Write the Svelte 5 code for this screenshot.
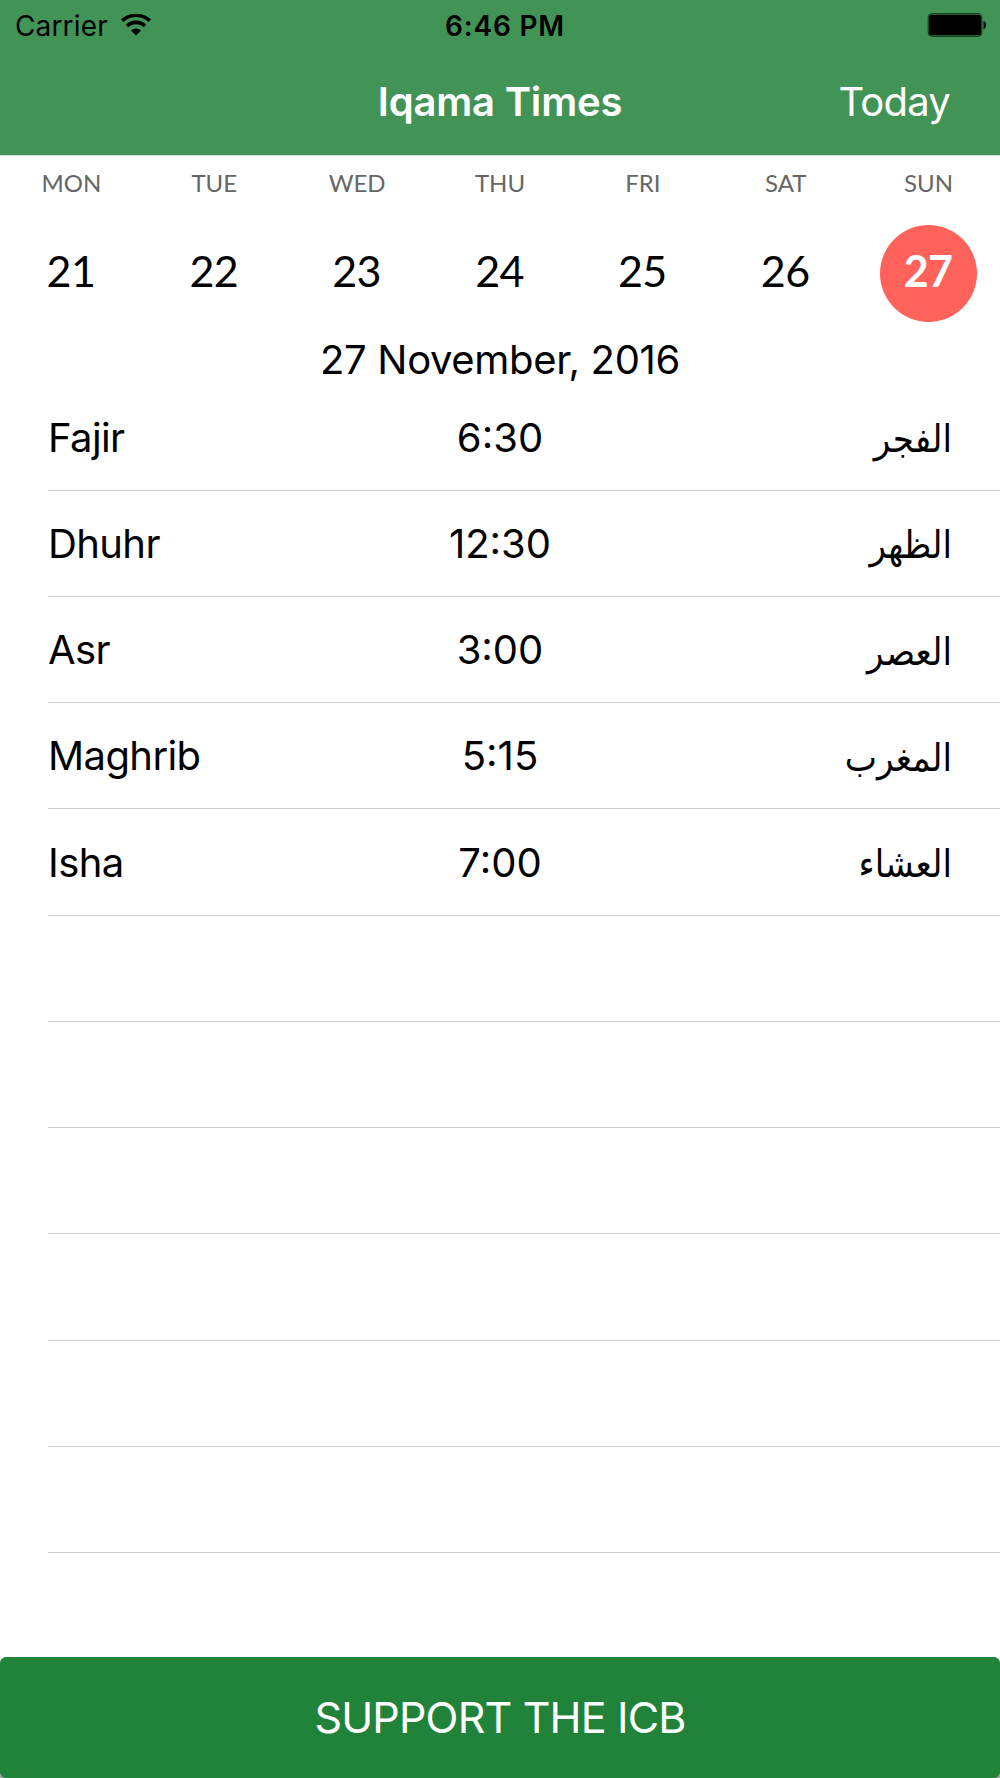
<script>
  const days = [
    { name: "MON", date: 21 },
    { name: "TUE", date: 22 },
    { name: "WED", date: 23 },
    { name: "THU", date: 24 },
    { name: "FRI", date: 25 },
    { name: "SAT", date: 26 },
    { name: "SUN", date: 27 },
  ];

  const prayers = [
    { name: "Fajir", time: "6:30", arabic: "الفجر" },
    { name: "Dhuhr", time: "12:30", arabic: "الظهر" },
    { name: "Asr", time: "3:00", arabic: "العصر" },
    { name: "Maghrib", time: "5:15", arabic: "المغرب" },
    { name: "Isha", time: "7:00", arabic: "العشاء" },
  ];

  const emptyRows = [1, 2, 3, 4, 5, 6];

  let selected = 27;
</script>

<div class="screen">
  <header>
    <div class="status-bar">
      <div class="carrier">
        <span>Carrier</span>
        <svg width="30" height="22" viewBox="0 0 30 22">
          <path
            d="M1.2 6.7a20.3 20.3 0 0 1 27.6 0"
            fill="none"
            stroke="#000"
            stroke-width="3.6"
          />
          <path
            d="M6 12a13 13 0 0 1 18 0"
            fill="none"
            stroke="#000"
            stroke-width="3.6"
          />
          <path d="M10 16.4a7.4 7.4 0 0 1 10 0L15 21.4z" />
        </svg>
      </div>
      <span class="clock">6:46 PM</span>
      <svg class="battery" width="60" height="24" viewBox="0 0 60 24">
        <rect
          x="1.2"
          y="0.7"
          width="53.6"
          height="22.6"
          rx="4"
          fill="none"
          stroke="#0b2a14"
        />
        <rect x="2" y="1.7" width="52" height="20.6" rx="2.5" />
        <path d="M56.500 8c3.500.8 3.500 7.200 0 8z" />
      </svg>
    </div>
    <nav>
      <h1>Iqama Times</h1>
      <button class="today" on:click={() => (selected = 27)}>Today</button>
    </nav>
  </header>

  <div class="week">
    {#each days as day}
      <div class="day">
        <span class="day-name">{day.name}</span>
        <button
          class="day-date"
          class:selected={day.date === selected}
          on:click={() => (selected = day.date)}>{day.date}</button
        >
      </div>
    {/each}
  </div>
  <p class="full-date">{selected} November, 2016</p>

  <ul>
    {#each prayers as prayer}
      <li>
        <span class="name">{prayer.name}</span>
        <span class="time">{prayer.time}</span>
        <span class="arabic" lang="ar" dir="rtl">{prayer.arabic}</span>
      </li>
    {/each}
    {#each emptyRows as row (row)}
      <li></li>
    {/each}
  </ul>

  <div class="footer">
    <button class="support">SUPPORT THE ICB</button>
  </div>
</div>

<style>
  :global(body) {
    background: #fff;
  }

  .screen {
    display: flex;
    flex-direction: column;
    width: 1000px;
    height: 1778px;
    overflow: hidden;
    font-family: Inter, "Liberation Sans", sans-serif;
    color: #000;
    background: #fff;
  }

  button {
    border: none;
    padding: 0;
    background: none;
    font: inherit;
    color: inherit;
  }

  header {
    box-sizing: border-box;
    height: 156px;
    background: #429456;
    border-bottom: 1px solid #d5ddd7;
  }

  .status-bar {
    display: grid;
    grid-template-columns: 1fr auto 1fr;
    align-items: center;
    height: 50px;
    padding: 0 13px 0 15px;
    font-size: 28px;
    line-height: 52px;
  }
  .carrier {
    display: flex;
    align-items: center;
    gap: 13px;
    letter-spacing: 0.15px;
  }
  .carrier svg {
    margin-bottom: 3px;
  }
  .clock {
    font-weight: 600;
    letter-spacing: 0.8px;
    padding-left: 8px;
  }
  .battery {
    justify-self: end;
    margin-bottom: 2px;
  }

  nav {
    display: grid;
    grid-template-columns: 1fr auto 1fr;
    align-items: center;
    height: 103px;
    padding: 0 50px;
    font-size: 40px;
    color: #fff;
  }
  h1 {
    grid-column: 2;
    margin: 0;
    font-size: 40px;
    font-weight: 600;
    letter-spacing: -0.2px;
  }
  .today {
    justify-self: end;
    letter-spacing: -0.8px;
  }

  .week {
    display: grid;
    grid-template-columns: repeat(7, 1fr);
    height: 168px;
    font-family: Lato, sans-serif;
  }
  .day {
    display: flex;
    flex-direction: column;
    align-items: center;
  }
  .day-name {
    height: 69px;
    font-size: 24px;
    line-height: 54px;
    color: #666;
  }
  .day-date {
    width: 97px;
    height: 97px;
    padding: 0 1px 5px 0;
    border-radius: 50%;
    font-size: 43px;
    line-height: 92px;
    letter-spacing: -0.6px;
  }
  .day-date.selected {
    background: #ff625a;
    color: #fff;
    font-weight: 700;
  }

  .full-date {
    margin: 0;
    height: 60.5px;
    font-size: 40px;
    line-height: 71px;
    letter-spacing: -0.33px;
    text-align: center;
  }

  ul {
    flex: 1;
    margin: 0;
    padding: 0 0 0 48px;
    list-style: none;
  }
  li {
    box-sizing: border-box;
    display: grid;
    grid-template-columns: 1fr 200px 1fr;
    align-items: center;
    height: 106.24px;
    padding: 0 48px 0 0;
    border-bottom: 1px solid #d0d0d2;
    font-size: 40px;
  }
  .name {
    letter-spacing: -0.6px;
  }
  .time {
    text-align: center;
  }
  .arabic {
    padding-top: 4px;
    font-family: "DejaVu Sans Condensed", "DejaVu Sans", sans-serif;
    font-stretch: condensed;
    font-size: 38px;
  }

  .footer {
    height: 121px;
    background: linear-gradient(#fff 50%, #aaa 50%);
  }
  .support {
    display: block;
    width: 100%;
    height: 121px;
    padding-bottom: 2px;
    border-radius: 6px;
    background: #21833a;
    color: #fff;
    font-size: 43px;
    letter-spacing: -0.83px;
  }
</style>
